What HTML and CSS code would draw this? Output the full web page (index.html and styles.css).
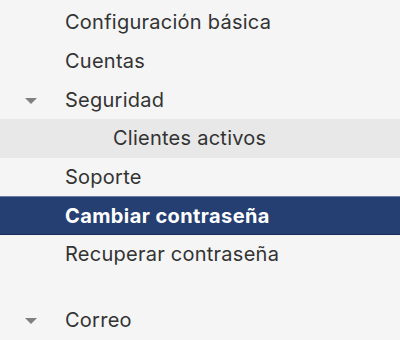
FILE: index.html
```html
<!DOCTYPE html>
<html lang="es">
<head>
    <meta charset="UTF-8">
    <meta name="viewport" content="width=device-width, initial-scale=1.0">
    <title>Menú</title>
    <link rel="stylesheet" href="styles.css">
</head>
<body>
    <ul class="menu">
        <li class="item">Configuración básica</li>
        <li class="item">Cuentas</li>
        <li class="item group"><span class="arrow"></span>Seguridad</li>
        <li class="item sub">Clientes activos</li>
        <li class="item">Soporte</li>
        <li class="item selected">Cambiar contraseña</li>
        <li class="item">Recuperar contraseña</li>
        <li class="spacer"></li>
        <li class="item group"><span class="arrow"></span>Correo</li>
    </ul>
</body>
</html>
```

FILE: styles.css
```css
body {
    margin: 0;
    background: #f5f5f5;
    font-family: Inter, "Noto Sans", sans-serif;
    color: #333;
}
.menu {
    list-style: none;
    margin: 0;
    padding: 3px 0 0 0;
}
.item {
    height: 38.7px;
    display: flex;
    align-items: center;
    padding-left: 65px;
    font-size: 20px;
    letter-spacing: 0.25px;
    box-sizing: border-box;
    position: relative;
}
.sub {
    padding-left: 113px;
    background: #e8e8e8;
}
.selected {
    background: #263f73;
    color: #fff;
    font-weight: bold;
    letter-spacing: 0.4px;
    border-top: 1px solid #6f7fa3;
    border-bottom: 1px solid #1a2d5a;
}
.spacer {
    height: 27px;
}
.arrow {
    position: absolute;
    left: 25px;
    top: 50%;
    margin-top: -2px;
    width: 0;
    height: 0;
    border-left: 6px solid transparent;
    border-right: 6px solid transparent;
    border-top: 6px solid #808080;
}
```
